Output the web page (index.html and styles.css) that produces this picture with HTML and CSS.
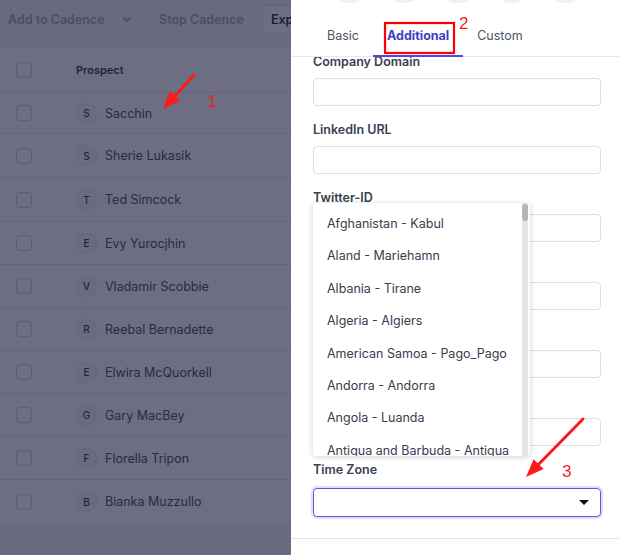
FILE: index.html
```html
<!DOCTYPE html>
<html>
<head>
<meta charset="utf-8">
<link rel="stylesheet" href="styles.css">
</head>
<body>
<div class="page">
  <div class="toolbar">
    <div class="btn-split">
      <span class="btn-main">Add to Cadence</span>
      <span class="btn-caret"><svg width="10" height="7" viewBox="0 0 10 7"><path d="M1.5 1.5 L5 5 L8.5 1.5" fill="none" stroke="#9ca3af" stroke-width="2"/></svg></span>
    </div>
    <span class="btn disabled">Stop Cadence</span>
    <span class="btn strong">Export</span>
  </div>
  <div class="card">
    <div class="row head">
      <span class="check"></span>
      <span class="col-title">Prospect</span>
    </div>
    <div class="row"><span class="check"></span><span class="avatar">S</span><span class="name">Sacchin</span></div>
    <div class="row"><span class="check"></span><span class="avatar">S</span><span class="name">Sherie Lukasik</span></div>
    <div class="row"><span class="check"></span><span class="avatar">T</span><span class="name">Ted Simcock</span></div>
    <div class="row"><span class="check"></span><span class="avatar">E</span><span class="name">Evy Yurocjhin</span></div>
    <div class="row"><span class="check"></span><span class="avatar">V</span><span class="name">Vladamir Scobbie</span></div>
    <div class="row"><span class="check"></span><span class="avatar">R</span><span class="name">Reebal Bernadette</span></div>
    <div class="row"><span class="check"></span><span class="avatar">E</span><span class="name">Elwira McQuorkell</span></div>
    <div class="row"><span class="check"></span><span class="avatar">G</span><span class="name">Gary MacBey</span></div>
    <div class="row"><span class="check"></span><span class="avatar">F</span><span class="name">Florella Tripon</span></div>
    <div class="row"><span class="check"></span><span class="avatar">B</span><span class="name">Bianka Muzzullo</span></div>
  </div>
</div>

<div class="overlay"></div>

<aside class="panel">
  <div class="steps">
    <span class="step"></span><span class="step"></span><span class="step"></span><span class="step"></span><span class="step"></span>
  </div>
  <nav class="tabs">
    <span class="tab">Basic</span>
    <span class="tab active">Additional</span>
    <span class="tab">Custom</span>
  </nav>
  <div class="form">
    <div class="form-inner">
      <div class="field"><label class="label">Company Domain</label><div class="input"></div></div>
      <div class="field"><label class="label">LinkedIn URL</label><div class="input"></div></div>
      <div class="field"><label class="label">Twitter-ID</label><div class="input"></div></div>
      <div class="field"><label class="label">Facebook</label><div class="input"></div></div>
      <div class="field"><label class="label">Website</label><div class="input"></div></div>
      <div class="field"><label class="label">Industry</label><div class="input"></div></div>
      <div class="field"><label class="label">Time Zone</label><div class="input select"><span class="caret"></span></div></div>
    </div>
  </div>
  <div class="footer"></div>

  <div class="dropdown">
    <ul class="options">
      <li>Afghanistan - Kabul</li>
      <li>Aland - Mariehamn</li>
      <li>Albania - Tirane</li>
      <li>Algeria - Algiers</li>
      <li>American Samoa - Pago_Pago</li>
      <li>Andorra - Andorra</li>
      <li>Angola - Luanda</li>
      <li>Antigua and Barbuda - Antigua</li>
      <li>Argentina - Buenos_Aires</li>
    </ul>
    <div class="scrolltrack"><div class="scrollthumb"></div></div>
  </div>
</aside>

<svg class="annotations" width="619" height="555" viewBox="0 0 619 555">
  <line x1="194" y1="75" x2="173" y2="98" stroke="#ff1a1a" stroke-width="3" stroke-linecap="round"/>
  <polygon points="163,109 180.3,100.4 169.9,91" fill="#ff1a1a"/>
  <text x="207" y="107" class="anno-num">1</text>
  <rect x="385" y="23" width="69" height="30" fill="none" stroke="#ff0000" stroke-width="2.2"/>
  <text x="459" y="29" class="anno-num">2</text>
  <line x1="583" y1="419" x2="536" y2="467" stroke="#ff1a1a" stroke-width="3" stroke-linecap="round"/>
  <polygon points="526,477 543.6,469.1 533.6,459.3" fill="#ff1a1a"/>
  <text x="562" y="477" class="anno-num">3</text>
</svg>
</body>
</html>
```

FILE: styles.css
```css
* { box-sizing: border-box; }

html, body {
  margin: 0;
  padding: 0;
}

body {
  width: 619px;
  height: 555px;
  overflow: hidden;
  background: #f1f2f4;
  font-family: Inter, "Noto Sans", sans-serif;
  color: #374151;
}

/* ---------- underlying page ---------- */
.page {
  display: flex;
  flex-direction: column;
  width: 619px;
}

.toolbar {
  display: flex;
  align-items: center;
  gap: 9px;
  padding-top: 5px;
  height: 33px;
  flex: none;
  white-space: nowrap;
}

.btn-split {
  display: flex;
  height: 28px;
  border: 1px solid #e5e7eb;
  border-left: none;
  border-radius: 0 4px 4px 0;
  background: #f3f4f6;
  flex: none;
}

.btn-main {
  display: flex;
  align-items: center;
  padding: 0 8px 0 8px;
  width: 113px;
  font-size: 12.5px;
  font-weight: 600;
  color: #9ca3af;
  border-right: 1px solid #e5e7eb;
  white-space: nowrap;
}

.btn-caret {
  display: flex;
  align-items: center;
  justify-content: center;
  width: 27px;
}

.btn {
  display: flex;
  align-items: center;
  height: 28px;
  padding: 0 8px;
  border: 1px solid #e5e7eb;
  border-radius: 4px;
  font-size: 12.5px;
  font-weight: 600;
  background: #f3f4f6;
  flex: none;
}

.btn.disabled { color: #9ca3af; }
.btn.strong { color: #111827; background: #ffffff; }

.card {
  margin-top: 14px;
  background: #ffffff;
  display: flex;
  flex-direction: column;
}

.row {
  display: flex;
  align-items: center;
  height: 43px;
  padding-left: 16px;
  border-bottom: 1px solid #e8e9ee;
  font-size: 12.5px;
}

.row.head {
  height: 46px;
}

.row:nth-child(2) { height: 41px; }
.row:nth-child(3) { height: 44px; }
.row:nth-child(4) { height: 44px; }

.row:last-child { border-bottom: none; }

.check {
  width: 16px;
  height: 16px;
  border: 1px solid #cfd3da;
  border-radius: 4px;
  margin-right: 44px;
  flex: none;
}

.col-title {
  font-size: 11px;
  font-weight: 600;
  color: #1f2937;
}

.avatar {
  width: 21px;
  height: 21px;
  border-radius: 50%;
  border: 1px solid #e3e5ea;
  background: #f6f7f9;
  display: flex;
  align-items: center;
  justify-content: center;
  font-size: 10px;
  font-weight: 500;
  color: #1f2937;
  margin-right: 8px;
  flex: none;
}

.name {
  color: #374151;
  font-size: 12.5px;
}

/* ---------- overlay ---------- */
.overlay {
  position: fixed;
  inset: 0;
  background: rgba(31, 33, 61, 0.65);
}

/* ---------- side panel ---------- */
.panel {
  position: fixed;
  top: 0;
  right: 0;
  width: 328px;
  height: 555px;
  background: #ffffff;
  display: flex;
  flex-direction: column;
}

.steps {
  display: flex;
  gap: 14px;
  padding-left: 39px;
  margin-top: -37px;
  height: 40px;
  flex: none;
}

.step {
  width: 40px;
  height: 40px;
  border-radius: 50%;
  background: #eeeefa;
}

.tabs {
  display: flex;
  padding-left: 21px;
  border-bottom: 1px solid #e5e7eb;
  flex: none;
}

.tab {
  padding: 25px 14px 11px;
  line-height: 16px;
  font-size: 12.5px;
  color: #4b5563;
  border-bottom: 2px solid transparent;
  margin-bottom: -1px;
}

.tab:first-child { padding-left: 15px; }

.tab.active {
  color: #3d3fc6;
  font-weight: 700;
  border-bottom-color: #4f46e5;
  padding-left: 14px;
  padding-right: 14px;
}

.form {
  flex: 1;
  overflow: hidden;
  padding: 0 18px 0 22px;
}

.form-inner {
  margin-top: -3px;
  display: flex;
  flex-direction: column;
}

.field {
  display: flex;
  flex-direction: column;
  gap: 8px;
  margin-bottom: 16px;
}

.label {
  font-size: 12.5px;
  line-height: 16px;
  font-weight: 600;
  color: #374151;
}

.input {
  height: 28px;
  border: 1px solid #dedfe3;
  border-radius: 4px;
}

.input.select {
  height: 29px;
  margin-top: 2px;
  border-color: #5b57e0;
  box-shadow: 0 0 0 2px rgba(99, 102, 241, 0.22);
  display: flex;
  align-items: center;
  justify-content: flex-end;
  padding-right: 11px;
}

.caret {
  width: 0;
  height: 0;
  border-left: 5px solid transparent;
  border-right: 5px solid transparent;
  border-top: 5px solid #111111;
}

.footer {
  height: 17px;
  border-top: 1px solid #e2e3e6;
  flex: none;
}

/* ---------- dropdown ---------- */
.dropdown {
  position: absolute;
  left: 22px;
  top: 203px;
  width: 217px;
  height: 253px;
  background: #ffffff;
  border-radius: 4px;
  box-shadow: 0 1px 6px rgba(0, 0, 0, 0.18);
  overflow: hidden;
  display: flex;
}

.options {
  list-style: none;
  margin: 0;
  padding: 5px 0 0 0;
  flex: 1;
}

.options li {
  height: 32.4px;
  line-height: 32.4px;
  padding-left: 14px;
  font-size: 12.5px;
  color: #3a3b4f;
  white-space: nowrap;
}

.scrolltrack {
  width: 6px;
  margin-right: 2px;
  background: #e6e6e6;
  flex: none;
}

.scrollthumb {
  width: 6px;
  height: 17px;
  margin-top: 1px;
  border-radius: 3px;
  background: #b5b5b5;
}

/* ---------- annotations ---------- */
.annotations {
  position: fixed;
  top: 0;
  left: 0;
  pointer-events: none;
}

.anno-num {
  font-family: "Liberation Sans", Arial, sans-serif;
  font-size: 17px;
  fill: #ff1a1a;
}
```
